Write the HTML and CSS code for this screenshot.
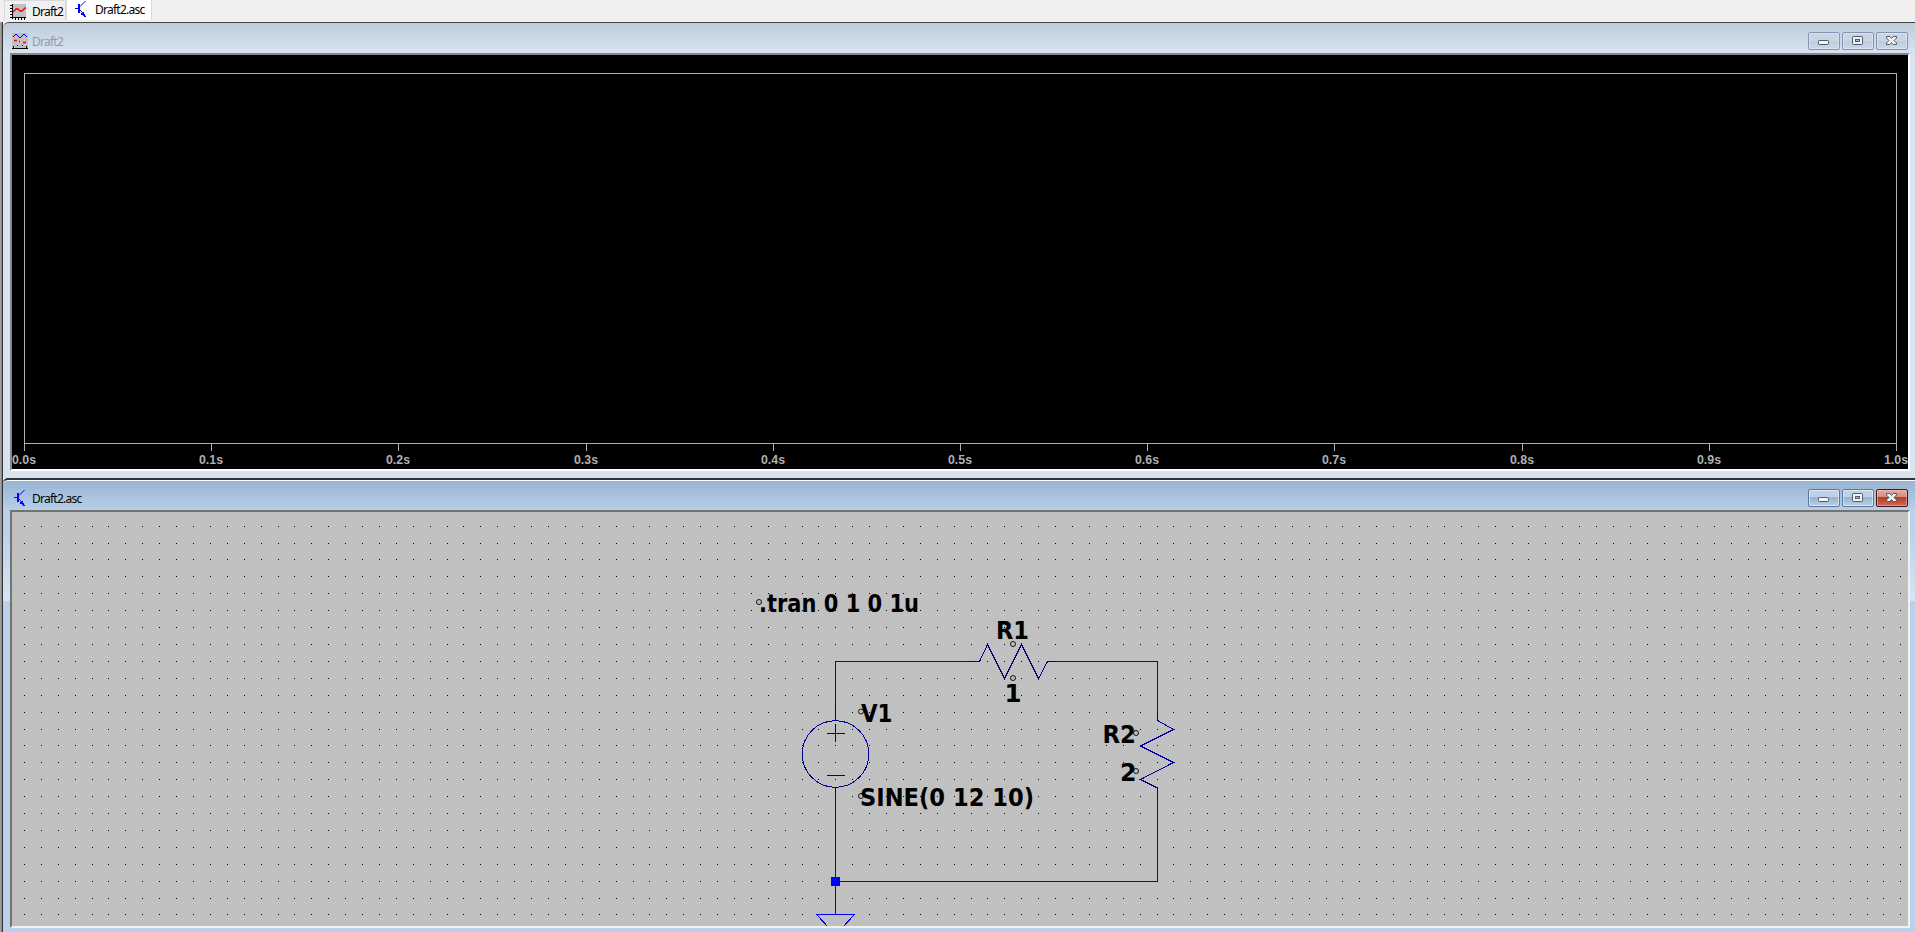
FILE: index.html
```
<!DOCTYPE html>
<html lang="en">
<head>
<meta charset="utf-8">
<title>Draft2.asc</title>
<link rel="stylesheet" href="styles.css">
</head>
<body>
<svg class="defs" width="0" height="0" aria-hidden="true">
  <symbol id="transistor" viewBox="0 0 12 16">
    <path d="M0 7h4v1h-4zM3 3h2v9h-2z" fill="#00f"/>
    <path d="M5 5.500L10.500 0M5 9L10 14.500" stroke="#00f" fill="none"/>
    <path d="M6 12h2v-1h1v2h1v2h1v1h-2v-1h-1v-1h-2z" fill="#00f"/>
  </symbol>
  <symbol id="min" viewBox="0 0 30 16">
    <rect x="9.500" y="7.500" width="10" height="4" rx=".8" fill="#f4f4f4" stroke="#4f5869"/>
  </symbol>
  <symbol id="max" viewBox="0 0 30 16">
    <rect x="9.500" y="3.500" width="10" height="8" rx=".8" fill="#f4f4f4" stroke="#4f5869"/>
    <rect x="12.500" y="6.500" width="4" height="2" fill="#a9bfd8" stroke="#4f5869"/>
  </symbol>
  <symbol id="close" viewBox="0 0 30 16">
    <path d="M9.500 3.500h3.300l1.700 2 1.700-2h3.300v1.500l-2.500 2.500 2.500 2.500v1.500h-3.300l-1.700-2-1.700 2h-3.300v-1.500l2.500-2.500-2.500-2.500z" fill="#f4f4f4" stroke="#4f5869"/>
  </symbol>
</svg>

<nav class="tabs">
  <div class="tab">
    <svg width="18" height="18" viewBox="0 0 18 18">
      <rect x="2" y="1" width="14" height="14" fill="#c0c0c0"/>
      <path d="M2.500 1v15M0 14.500h16M0 2.500h2M0 5.500h2M0 8.500h2M0 11.500h2M5.500 14v3M8.500 14v3M11.500 14v3M14.500 14v3" stroke="#000" fill="none"/>
      <path d="M3 9l3-3h2l2 2h2l3-3h1" stroke="#f00" stroke-width="1.500" fill="none"/>
    </svg>
    <span class="label">Draft2</span>
  </div>
  <div class="tab active">
    <svg width="12" height="16"><use href="#transistor"/></svg>
    <span class="label">Draft2.asc</span>
  </div>
</nav>

<section class="window plot-window">
  <header class="titlebar">
    <svg class="icon" width="16" height="16" viewBox="0 0 16 16">
      <rect width="16" height="16" fill="#c0c0c0"/>
      <path d="M1 4l3-3 4 4 4-4 3 3" stroke="#00f" fill="none"/>
      <path d="M2 7.500h3M7 8.500h1M11 9.500h3" stroke="#f00" stroke-width="1.500"/>
      <path d="M0 15.500h16M1.500 13v3M5.500 12v1M10.500 12v1M14.500 13v3" stroke="#000"/>
    </svg>
    <span class="label title">Draft2</span>
    <div class="buttons">
      <button class="btn"><svg width="30" height="16"><use href="#min"/></svg></button>
      <button class="btn"><svg width="30" height="16"><use href="#max"/></svg></button>
      <button class="btn"><svg width="30" height="16"><use href="#close"/></svg></button>
    </div>
  </header>
  <div class="client">
    <svg class="plot" width="1896" height="414" viewBox="12 55 1896 414">
      <rect class="axis" x="24.500" y="73.500" width="1872" height="370"/>
      <g id="ticks"></g>
    </svg>
  </div>
</section>

<section class="window schematic-window">
  <header class="titlebar">
    <svg class="icon" width="12" height="16"><use href="#transistor"/></svg>
    <span class="label title">Draft2.asc</span>
    <div class="buttons">
      <button class="btn"><svg width="30" height="16"><use href="#min"/></svg></button>
      <button class="btn"><svg width="30" height="16"><use href="#max"/></svg></button>
      <button class="btn danger"><svg width="30" height="16"><use href="#close"/></svg></button>
    </div>
  </header>
  <div class="client">
    <svg class="schematic" width="1896" height="414" viewBox="12 512 1896 414">
      <path id="grid" fill="#000"/>
      <path class="wire" d="M835.500 707V661.500H972M1055 661.500H1157.500V713M1157.500 796V881.500H835.500M835.500 796V914"/>
      <path class="part" d="M972 661.500H979.500L987.500 644.500L1004.500 678.500L1021.500 644.500L1038.500 678.500L1047.500 661.500H1055"/>
      <path class="part" d="M1157.500 712V720.500L1173.500 729.500L1140.500 746L1173.500 762.500L1140.500 779.500L1157.500 788V797"/>
      <circle class="part" cx="835.500" cy="754" r="33.300"/>
      <path class="part" d="M835.500 706V720M835.500 788V797M827 733.500H845M835.500 724V742M827 775.500H845"/>
      <rect x="831" y="877" width="9" height="9" fill="#00f"/>
      <path class="wire" d="M816 914.500H855M816.500 914.500L835.500 935M854.500 914.500L835.500 935"/>
      <g class="names">
        <text x="759" y="612" textLength="160" lengthAdjust="spacingAndGlyphs">.tran 0 1 0 1u</text>
        <text x="996" y="639" textLength="33" lengthAdjust="spacingAndGlyphs">R1</text>
        <text x="1004.500" y="702" textLength="17" lengthAdjust="spacingAndGlyphs">1</text>
        <text x="861" y="722" textLength="31.500" lengthAdjust="spacingAndGlyphs">V1</text>
        <text x="860" y="806" textLength="174" lengthAdjust="spacingAndGlyphs">SINE(0 12 10)</text>
        <text x="1102.500" y="743" textLength="33.500" lengthAdjust="spacingAndGlyphs">R2</text>
        <text x="1120" y="781" textLength="16.500" lengthAdjust="spacingAndGlyphs">2</text>
      </g>
      <g class="anchors">
        <circle cx="759" cy="602" r="2.500"/>
        <circle cx="1013" cy="644" r="2.500"/>
        <circle cx="1013" cy="678" r="2.500"/>
        <circle cx="861" cy="711.500" r="2.500"/>
        <circle cx="861" cy="796" r="2.500"/>
        <circle cx="1136" cy="733" r="2.500"/>
        <circle cx="1136" cy="771" r="2.500"/>
      </g>
    </svg>
  </div>
</section>
<script src="main.js"></script>
</body>
</html>
```
FILE: styles.css
```
* { box-sizing: border-box; }
body {
  margin: 0;
  width: 1915px;
  height: 932px;
  overflow: hidden;
  display: flex;
  flex-direction: column;
  padding-left: 3px;
  background: linear-gradient(90deg, #a0a0a0 0 1px, #8a8a8a 1px 2px, #333 2px 3px, #f0f0f0 3px);
}
.defs { display: none; }
.label {
  font: 12px/16px "Noto Sans", "Open Sans", sans-serif;
  letter-spacing: -0.75px;
  color: #000;
}

.tabs {
  display: flex;
  height: 22px;
  flex: none;
  margin-left: -3px;
  padding-left: 4px;
  background: #f0f0f0;
}
.tab {
  display: flex;
  gap: 4px;
  width: 62px;
  height: 20px;
  padding: 2px 0 0 5px;
  border: 1px solid #d9d9d9;
  border-bottom: 0;
}
.tab .label { line-height: 17px; }
.tab.active {
  width: 86px;
  gap: 8px;
  padding: 1px 0 0 8px;
  background: #fff;
  border-top: 0;
}

.window {
  flex: none;
  display: flex;
  flex-direction: column;
  padding: 0 5px 0 7px;
}
.plot-window {
  height: 456px;
  border-top: 1px solid #444;
  border-radius: 6px 0 0 0;
  background: linear-gradient(#bfcddb, #d7e4f2 32px, #d7e4f2);
}
.schematic-window {
  height: 454px;
  border-top: 2px solid #333;
  border-radius: 5px 0 0 0;
  box-shadow: inset 0 1px #fff;
  background: linear-gradient(#98b4d2, #b9d1ea 32px, #bdd4eb 60px, #d8e5f3 121px, #b9d1ea 121px);
}
.titlebar {
  display: flex;
  align-items: flex-start;
  flex: none;
  height: 30px;
  padding: 6px 0 0 2px;
}
.schematic-window .titlebar { padding-left: 4px; }
.icon { margin-top: 4px; }
.title { margin: 5px 0 0 4px; }
.schematic-window .title { margin-left: 6px; }
.plot-window .title { color: #999; }
.buttons {
  display: flex;
  gap: 2px;
  margin-left: auto;
  padding: 3px 2px 0 0;
}
.btn {
  width: 32px;
  height: 18px;
  padding: 0;
  border: 1px solid #8494b0;
  border-radius: 2px;
  background: linear-gradient(#c8d5e3 50%, #bdccdd 50%, #cad8e7);
  box-shadow: inset 0 0 0 1px rgba(255, 255, 255, .35);
}
.btn svg { display: block; }
.schematic-window .btn {
  border-color: #5f7694;
  background: linear-gradient(#bdd1e8 45%, #97b2d0 45%, #b6d0ea);
  box-shadow: inset 0 0 0 1px rgba(255, 255, 255, .5);
}
.schematic-window .btn.danger {
  border-color: #431422;
  background: linear-gradient(#e4a79c, #d68c80 45%, #b73c25 45%, #cc6b50);
  box-shadow: inset 0 0 0 1px rgba(255, 200, 190, .5);
}
.client {
  width: 1900px;
  height: 418px;
  flex: none;
  border: 2px solid;
  border-color: #888 #fff #fff #888;
}
.client svg { display: block; }
.plot { background: #000; }
.schematic { background: #c0c0c0; }
.schematic-window .client { border-color: #737373 #f2f2f2 #f2f2f2 #737373; }
.axis { fill: none; stroke: #b0b0b0; shape-rendering: crispEdges; }
.axis-text {
  font: bold 13px "Liberation Sans", Arial, sans-serif;
  fill: #b0b0b0;
  text-anchor: middle;
}
#grid, .wire, .part { shape-rendering: crispEdges; }
.wire { fill: none; stroke: #0000f0; }
.part { fill: none; stroke: #000090; }
.names text {
  font: bold 24px "DejaVu Sans Condensed", "DejaVu Sans", sans-serif;
  font-stretch: condensed;
  fill: #000;
}
.anchors circle { fill: none; stroke: #000; stroke-width: .9; }
```
FILE: main.js
```
const SVG_NS = 'http://www.w3.org/2000/svg';

// Time axis: a tick and a label every 0.1 s.
const ticks = document.getElementById('ticks');
for (let i = 0; i <= 10; i++) {
  const x = Math.round(24 + i * 187.2) + 0.5;
  const line = document.createElementNS(SVG_NS, 'path');
  line.setAttribute('class', 'axis');
  line.setAttribute('d', `M${x} 444V451`);
  const text = document.createElementNS(SVG_NS, 'text');
  text.setAttribute('class', 'axis-text');
  text.setAttribute('x', x - 0.5);
  text.setAttribute('y', 464);
  text.setAttribute('textLength', 24);
  text.setAttribute('lengthAdjust', 'spacingAndGlyphs');
  text.textContent = (i / 10).toFixed(1) + 's';
  ticks.append(line, text);
}

// Schematic grid, snapped to whole pixels.
const pitch = 16.9042;
let d = '';
for (let r = 0; r < 24; r++) {
  for (let c = 0; c < 112; c++) {
    const x = Math.floor(24.455 + c * pitch);
    const y = Math.floor(526.17 + r * pitch);
    d += `M${x} ${y}h1v1h-1z`;
  }
}
document.getElementById('grid').setAttribute('d', d);
```
